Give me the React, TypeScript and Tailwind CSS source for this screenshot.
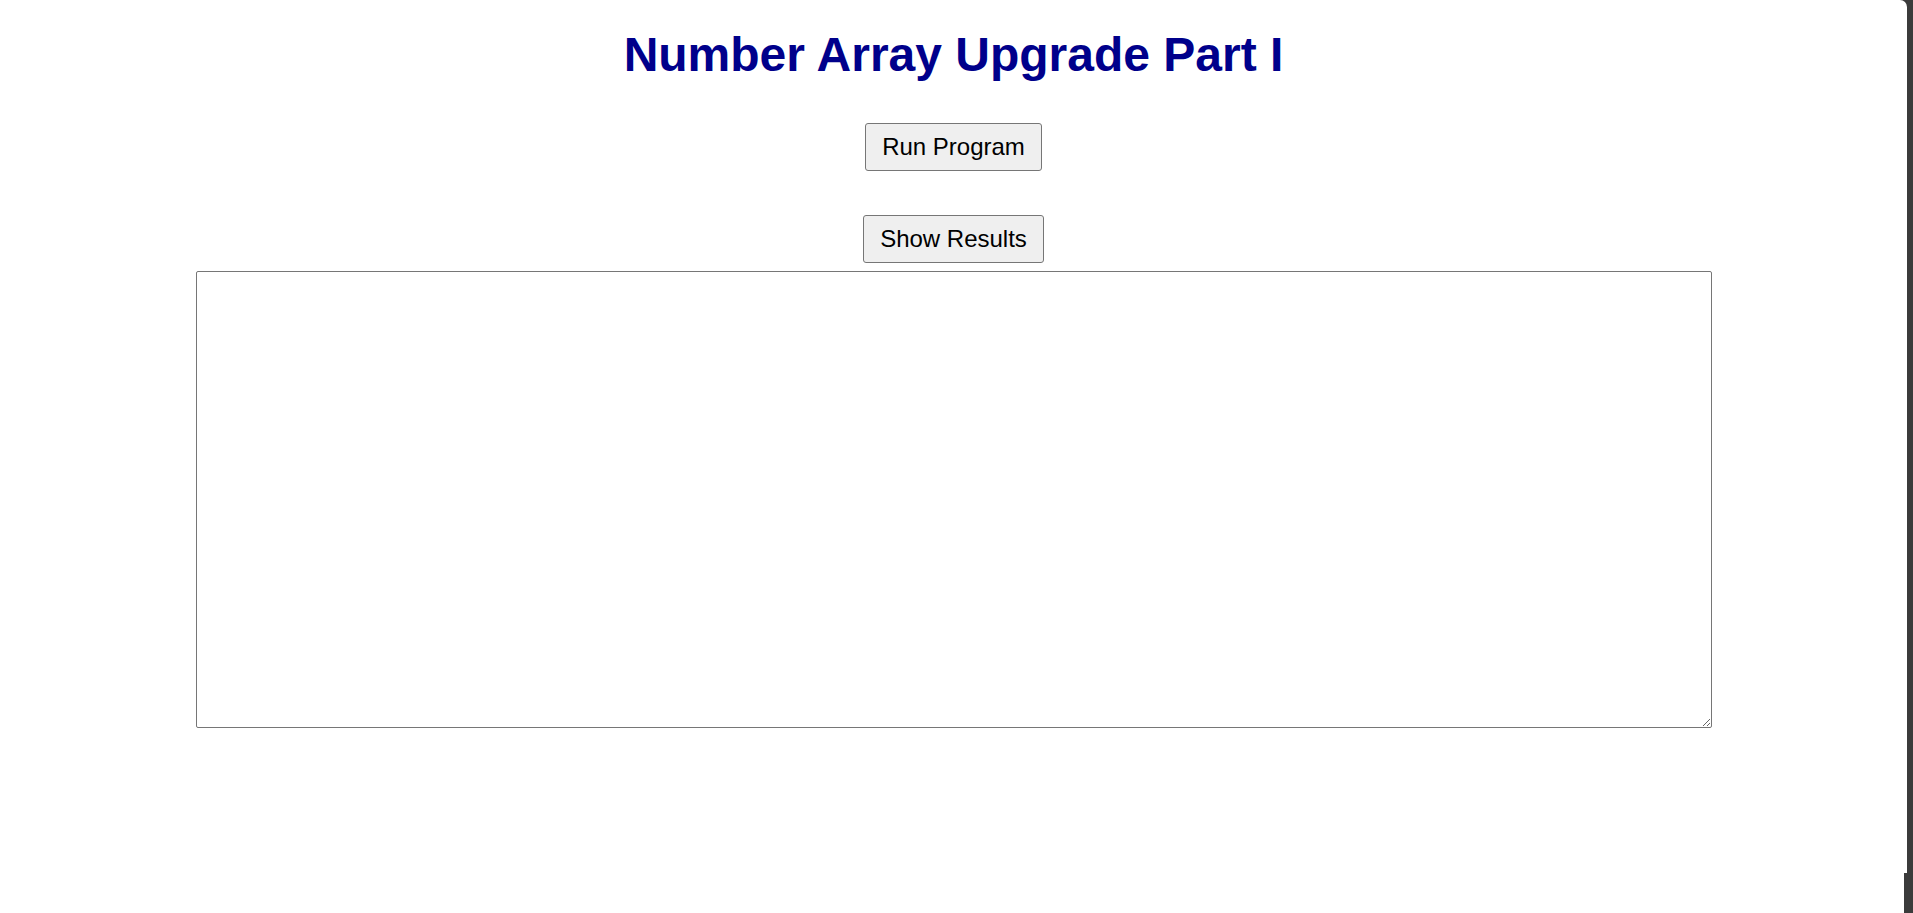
import React from "react";

export default function App() {
  return (
    <div className="relative flex h-[913px] w-full bg-[#3b3b3b] overflow-hidden" style={{ fontFamily: '"Liberation Sans", Arial, sans-serif' }}>
      <div className="flex flex-1 flex-col items-center bg-white rounded-tr-[7px]">
        <h1 className="mt-[27px] text-[48px] leading-[55px] font-bold text-[#00008b]">
          Number Array Upgrade Part I
        </h1>
        <button className="mt-[41px] h-[48px] px-4 text-[24px] text-black bg-[#efefef] border border-[#767676] rounded-[3px]">
          Run Program
        </button>
        <button className="mt-[44px] h-[48px] px-4 text-[24px] text-black bg-[#efefef] border border-[#767676] rounded-[3px]">
          Show Results
        </button>
        <textarea className="mt-[8px] h-[457px] w-[1516px] border border-[#767676] rounded-[2px] bg-white" />
      </div>
      <div className="w-[6px]" />
      <div className="absolute right-0 bottom-0 h-[40px] w-[9px] bg-[#3b3b3b]" />
    </div>
  );
}
